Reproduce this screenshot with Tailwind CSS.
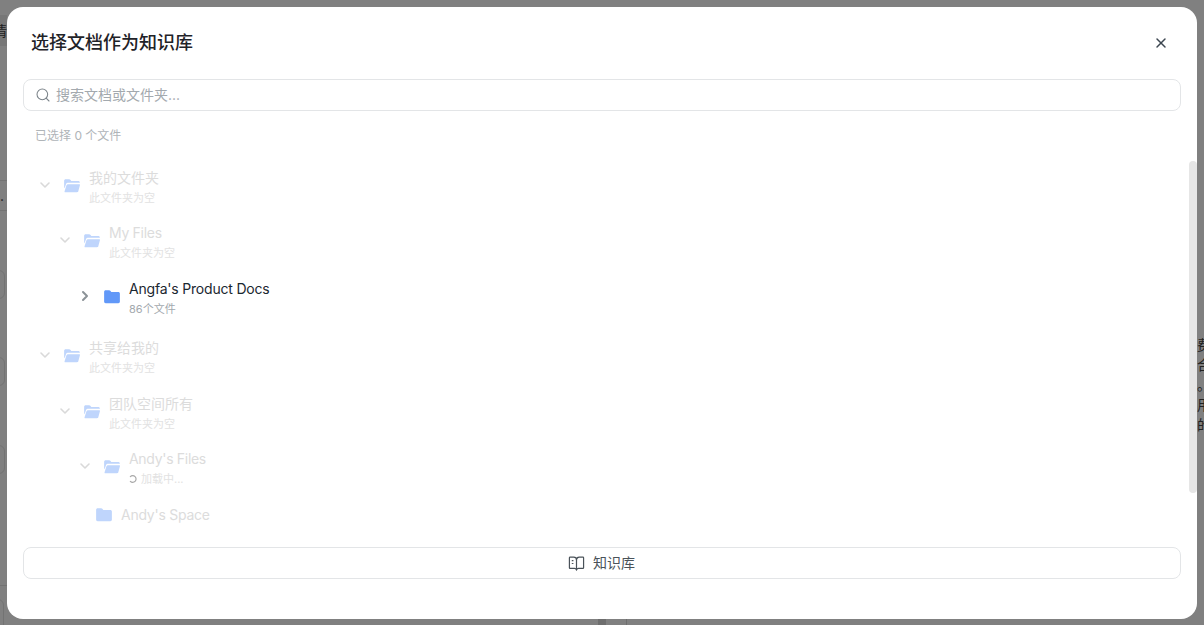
<!DOCTYPE html>
<html lang="zh-CN">
<head>
<meta charset="UTF-8">
<title>选择文档作为知识库</title>
<script src="https://cdn.jsdelivr.net/npm/@tailwindcss/browser@4"></script>
</head>
<body class="relative h-[625px] w-[1204px] overflow-hidden bg-[#808080] font-['Inter','Noto_Sans_CJK_SC',sans-serif]">

  <!-- page behind the dialog, only its edges show -->
  <div class="absolute left-[-7px] top-[15px] h-[31px] w-[14px] bg-[#777777] text-sm leading-[31px] text-[#222222]">情</div>
  <div class="absolute left-0 top-[180px] h-[31px] w-[7px] overflow-hidden border-y border-[#737373] text-sm leading-[29px] text-[#222222]">.个</div>
  <div class="absolute left-[-20px] top-[270px] h-[29px] w-[25px] rounded-md border border-[#737373]"></div>
  <div class="absolute left-[-20px] top-[357px] h-[29px] w-[25px] rounded-md border border-[#737373]"></div>
  <div class="absolute left-[-20px] top-[445px] h-[29px] w-[25px] rounded-md border border-[#737373]"></div>
  <div class="absolute left-[-20px] top-[599px] h-[40px] w-[24px] rounded-md border border-[#737373]"></div>
  <div class="absolute left-0 top-[585px] h-px w-[7px] bg-[#737373]"></div>
  <div class="absolute left-[598px] top-[619px] h-[6px] w-[8px] bg-[#6e6e6e]"></div>
  <div class="absolute left-[626px] top-[619px] h-[6px] w-px bg-[#6e6e6e]"></div>
  <div class="absolute left-[1197px] top-[335px] flex w-[14px] flex-col text-sm leading-[20px] text-[#222222]">
    <span>费</span><span>合</span><span>。</span><span>用</span><span>的</span>
  </div>

  <!-- dialog -->
  <div class="absolute left-[7px] top-[7px] flex h-[612px] w-[1190px] flex-col overflow-hidden rounded-2xl bg-white">
    <div class="flex h-[72px] shrink-0 items-center justify-between pl-6 pr-[28px]">
      <h2 class="text-lg font-medium text-[#1f2328]">选择文档作为知识库</h2>
      <svg class="size-4 text-[#3c4650]" viewBox="0 0 24 24" fill="none" stroke="currentColor" stroke-width="2.2" stroke-linecap="round"><path d="M18 6 6 18"/><path d="m6 6 12 12"/></svg>
    </div>

    <div class="mx-4 flex h-8 shrink-0 items-center gap-[5px] rounded-lg border border-[#e3e5e7] pl-[11px]">
      <svg class="size-4 text-[#7d858b]" viewBox="0 0 24 24" fill="none" stroke="currentColor" stroke-width="1.6" stroke-linecap="round"><circle cx="11" cy="11" r="8"/><path d="m21 21-4.3-4.3"/></svg>
      <span class="text-sm text-[#a3a9ae]">搜索文档或文件夹...</span>
    </div>

    <div class="mt-[17px] h-[16px] shrink-0 pl-[28px] text-xs leading-[16px] text-[#afb4b8]">已选择 0 个文件</div>

    <div class="relative h-[397px] shrink-0 overflow-hidden">
      <div class="pt-[18px]">

        <div class="flex h-[55px] items-start gap-[9px] pl-[30px] pt-[5px]">
          <svg class="mt-[10px] size-4 text-[#d9d9d9]" viewBox="0 0 24 24" fill="none" stroke="currentColor" stroke-width="2.4" stroke-linecap="round" stroke-linejoin="round"><path d="m6 9 6 6 6-6"/></svg>
          <svg class="-mr-px ml-px mt-[10px] size-[18px] text-[#bfd5fc]" viewBox="0 0 16 16" fill="currentColor"><path d="M1 3.300C1 2.600 1.600 2 2.300 2h3.200c.4 0 .7.200 1 .5l.9 1h6.300c.7 0 1.300.6 1.300 1.300v.4H4.200c-.7 0-1.200.4-1.500 1L1.600 9.500H1z"/><path d="M4.300 6.500h10.300c.4 0 .6.4.5.7l-1.500 5.500c-.1.5-.6.8-1.100.8H2c-.5 0-.8-.4-.6-.9l1.700-5.200c.2-.5.7-.9 1.200-.9z"/></svg>
          <div class="flex flex-col"><span class="text-sm leading-[22px] text-[#dcdcdc]">我的文件夹</span><span class="text-[11px] leading-[18px] text-[#e2e2e2]">此文件夹为空</span></div>
        </div>

        <div class="flex h-[56px] items-start gap-[9px] pl-[50px] pt-[5px]">
          <svg class="mt-[10px] size-4 text-[#d9d9d9]" viewBox="0 0 24 24" fill="none" stroke="currentColor" stroke-width="2.4" stroke-linecap="round" stroke-linejoin="round"><path d="m6 9 6 6 6-6"/></svg>
          <svg class="-mr-px ml-px mt-[10px] size-[18px] text-[#bfd5fc]" viewBox="0 0 16 16" fill="currentColor"><path d="M1 3.300C1 2.600 1.600 2 2.300 2h3.200c.4 0 .7.200 1 .5l.9 1h6.300c.7 0 1.300.6 1.300 1.300v.4H4.200c-.7 0-1.200.4-1.500 1L1.600 9.500H1z"/><path d="M4.300 6.500h10.300c.4 0 .6.4.5.7l-1.500 5.500c-.1.5-.6.8-1.100.8H2c-.5 0-.8-.4-.6-.9l1.700-5.200c.2-.5.7-.9 1.200-.9z"/></svg>
          <div class="flex flex-col"><span class="text-sm leading-[22px] tracking-[-0.3px] text-[#dcdcdc]">My Files</span><span class="text-[11px] leading-[18px] text-[#e2e2e2]">此文件夹为空</span></div>
        </div>

        <div class="flex h-[59px] items-start gap-[9px] pl-[70px] pt-[5px]">
          <svg class="mt-[10px] size-4 text-[#8b9297]" viewBox="0 0 24 24" fill="none" stroke="currentColor" stroke-width="3" stroke-linecap="round" stroke-linejoin="round"><path d="m9 18 6-6-6-6"/></svg>
          <svg class="-mr-px ml-px mt-[10px] size-[18px] text-[#6198f8]" viewBox="0 0 16 16" fill="currentColor"><path d="M1 3.300C1 2.600 1.600 2 2.300 2h3.200c.4 0 .7.200 1 .5l.9 1h6.300c.7 0 1.300.6 1.300 1.300v7.400c0 .7-.6 1.300-1.300 1.300H2.300C1.600 13.500 1 12.900 1 12.200z"/></svg>
          <div class="flex flex-col"><span class="text-sm leading-[22px] tracking-[-0.2px] text-[#1b2730]">Angfa's Product Docs</span><span class="text-[11px] leading-[18px] text-[#a3a9ae]">86个文件</span></div>
        </div>

        <div class="flex h-[56px] items-start gap-[9px] pl-[30px] pt-[5px]">
          <svg class="mt-[10px] size-4 text-[#d9d9d9]" viewBox="0 0 24 24" fill="none" stroke="currentColor" stroke-width="2.4" stroke-linecap="round" stroke-linejoin="round"><path d="m6 9 6 6 6-6"/></svg>
          <svg class="-mr-px ml-px mt-[10px] size-[18px] text-[#bfd5fc]" viewBox="0 0 16 16" fill="currentColor"><path d="M1 3.300C1 2.600 1.600 2 2.300 2h3.200c.4 0 .7.200 1 .5l.9 1h6.300c.7 0 1.300.6 1.300 1.300v.4H4.200c-.7 0-1.200.4-1.500 1L1.600 9.500H1z"/><path d="M4.300 6.500h10.300c.4 0 .6.4.5.7l-1.500 5.500c-.1.5-.6.8-1.100.8H2c-.5 0-.8-.4-.6-.9l1.700-5.200c.2-.5.7-.9 1.200-.9z"/></svg>
          <div class="flex flex-col"><span class="text-sm leading-[22px] text-[#dcdcdc]">共享给我的</span><span class="text-[11px] leading-[18px] text-[#e2e2e2]">此文件夹为空</span></div>
        </div>

        <div class="flex h-[55px] items-start gap-[9px] pl-[50px] pt-[5px]">
          <svg class="mt-[10px] size-4 text-[#d9d9d9]" viewBox="0 0 24 24" fill="none" stroke="currentColor" stroke-width="2.4" stroke-linecap="round" stroke-linejoin="round"><path d="m6 9 6 6 6-6"/></svg>
          <svg class="-mr-px ml-px mt-[10px] size-[18px] text-[#bfd5fc]" viewBox="0 0 16 16" fill="currentColor"><path d="M1 3.300C1 2.600 1.600 2 2.300 2h3.200c.4 0 .7.200 1 .5l.9 1h6.300c.7 0 1.300.6 1.300 1.300v.4H4.200c-.7 0-1.200.4-1.500 1L1.600 9.500H1z"/><path d="M4.300 6.500h10.300c.4 0 .6.4.5.7l-1.500 5.500c-.1.5-.6.8-1.100.8H2c-.5 0-.8-.4-.6-.9l1.700-5.200c.2-.5.7-.9 1.200-.9z"/></svg>
          <div class="flex flex-col"><span class="text-sm leading-[22px] text-[#dcdcdc]">团队空间所有</span><span class="text-[11px] leading-[18px] text-[#e2e2e2]">此文件夹为空</span></div>
        </div>

        <div class="flex h-[56px] items-start gap-[9px] pl-[70px] pt-[5px]">
          <svg class="mt-[10px] size-4 text-[#d9d9d9]" viewBox="0 0 24 24" fill="none" stroke="currentColor" stroke-width="2.4" stroke-linecap="round" stroke-linejoin="round"><path d="m6 9 6 6 6-6"/></svg>
          <svg class="-mr-px ml-px mt-[10px] size-[18px] text-[#bfd5fc]" viewBox="0 0 16 16" fill="currentColor"><path d="M1 3.300C1 2.600 1.600 2 2.300 2h3.200c.4 0 .7.200 1 .5l.9 1h6.300c.7 0 1.300.6 1.300 1.300v.4H4.200c-.7 0-1.200.4-1.500 1L1.600 9.500H1z"/><path d="M4.300 6.500h10.300c.4 0 .6.4.5.7l-1.500 5.500c-.1.5-.6.8-1.100.8H2c-.5 0-.8-.4-.6-.9l1.700-5.200c.2-.5.7-.9 1.200-.9z"/></svg>
          <div class="flex flex-col">
            <span class="text-sm leading-[22px] tracking-[-0.3px] text-[#dcdcdc]">Andy's Files</span>
            <span class="flex items-center gap-1 text-[11px] leading-[18px] text-[#e2e2e2]">
              <svg class="size-2 text-[#a8a8a8]" viewBox="0 0 24 24" fill="none" stroke="currentColor" stroke-width="3.5" stroke-linecap="round"><path d="M4 5a10 10 0 1 1 0 14"/></svg>
              加载中...
            </span>
          </div>
        </div>

        <div class="flex h-[32px] items-center gap-2 pl-[88px]">
          <svg class="size-[18px] text-[#bfd5fc]" viewBox="0 0 16 16" fill="currentColor"><path d="M1 3.300C1 2.600 1.600 2 2.300 2h3.200c.4 0 .7.200 1 .5l.9 1h6.300c.7 0 1.300.6 1.300 1.300v7.400c0 .7-.6 1.300-1.300 1.300H2.300C1.600 13.500 1 12.900 1 12.200z"/></svg>
          <span class="text-sm tracking-[-0.25px] text-[#dcdcdc]">Andy's Space</span>
        </div>
      </div>

      <!-- scrollbar -->
      <div class="absolute right-0 top-[17px] h-[332px] w-2 rounded-full bg-[#e6e6e6]"></div>
    </div>

    <div class="mx-4 mt-[6px] flex h-8 shrink-0 items-center justify-center gap-2 rounded-lg border border-[#e3e5e7] text-sm text-[#4a5259]">
      <svg class="-ml-px size-[17px]" viewBox="0 0 24 24" fill="none" stroke="currentColor" stroke-width="1.7" stroke-linecap="round" stroke-linejoin="round"><path d="M12 7v14"/><path d="M6 8h1"/><path d="M6 12h1"/><path d="M3 19a1 1 0 0 1-1-1V4a1 1 0 0 1 1-1h5a4 4 0 0 1 4 4 4 4 0 0 1 4-4h5a1 1 0 0 1 1 1v14a1 1 0 0 1-1 1h-6a3 3 0 0 0-3 2 3 3 0 0 0-3-2z"/></svg>
      知识库
    </div>
  </div>
</body>
</html>
